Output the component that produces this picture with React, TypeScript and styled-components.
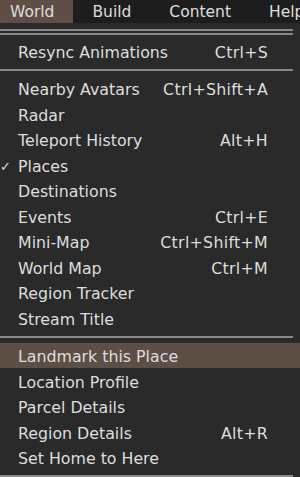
import styled, { createGlobalStyle } from "styled-components";

const GlobalStyle = createGlobalStyle`
  html, body {
    margin: 0;
    padding: 0;
    background: #2a2a2a;
  }
  body {
    width: 300px;
    height: 477px;
    overflow: hidden;
    font-family: "DejaVu Sans", "Liberation Sans", sans-serif;
    font-size: 15.5px;
    color: #dedede;
    -webkit-font-smoothing: antialiased;
  }
`;

const MenuBar = styled.div`
  display: flex;
  height: 23px;
  background: #1d1d1d;
  white-space: nowrap;
  overflow: hidden;
`;

const MenuTitle = styled.div<{ $active?: boolean }>`
  display: flex;
  align-items: center;
  padding: 0 19px;
  background: ${(p) => (p.$active ? "#5e4e45" : "transparent")};
  &:first-child {
    padding-left: 10px;
  }
`;

const Menu = styled.div`
  display: flex;
  flex-direction: column;
  background: #2a2a2a;
`;

const TearOff = styled.div`
  display: flex;
  flex-direction: column;
  gap: 2px;
  padding: 6px 7px 3px 0;
`;

const Line = styled.div`
  height: 2px;
  background: #8a8a8a;
`;

const Separator = styled.div`
  padding: 5px 7px 5px 0;
`;

const Item = styled.div<{ $hover?: boolean }>`
  box-sizing: border-box;
  display: grid;
  grid-template-columns: 18px 1fr auto;
  align-items: center;
  height: 25.5px;
  padding: 3px 32px 0 0;
  font-size: 15.8px;
  background: ${(p) => (p.$hover ? "#5e4f46" : "transparent")};
  white-space: nowrap;
`;

const Check = styled.span`
  font-size: 13px;
  line-height: 1;
`;

const Shortcut = styled.span`
  text-align: right;
  letter-spacing: 0.3px;
`;

type Entry = { label: string; key?: string; checked?: boolean; hover?: boolean };

const groups: Entry[][] = [
  [{ label: "Resync Animations", key: "Ctrl+S" }],
  [
    { label: "Nearby Avatars", key: "Ctrl+Shift+A" },
    { label: "Radar" },
    { label: "Teleport History", key: "Alt+H" },
    { label: "Places", checked: true },
    { label: "Destinations" },
    { label: "Events", key: "Ctrl+E" },
    { label: "Mini-Map", key: "Ctrl+Shift+M" },
    { label: "World Map", key: "Ctrl+M" },
    { label: "Region Tracker" },
    { label: "Stream Title" },
  ],
  [
    { label: "Landmark this Place", hover: true },
    { label: "Location Profile" },
    { label: "Parcel Details" },
    { label: "Region Details", key: "Alt+R" },
    { label: "Set Home to Here" },
  ],
];

export default function App() {
  return (
    <>
      <GlobalStyle />
      <MenuBar>
        <MenuTitle $active>World</MenuTitle>
        <MenuTitle>Build</MenuTitle>
        <MenuTitle>Content</MenuTitle>
        <MenuTitle>Help</MenuTitle>
      </MenuBar>
      <Menu>
        <TearOff>
          <Line />
          <Line />
        </TearOff>
        {groups.map((g, gi) => (
          <div key={gi}>
            {g.map((e) => (
              <Item key={e.label} $hover={e.hover}>
                <Check>{e.checked ? "✓" : ""}</Check>
                <span>{e.label}</span>
                <Shortcut>{e.key ?? ""}</Shortcut>
              </Item>
            ))}
            <Separator>
              <Line />
            </Separator>
          </div>
        ))}
      </Menu>
    </>
  );
}
